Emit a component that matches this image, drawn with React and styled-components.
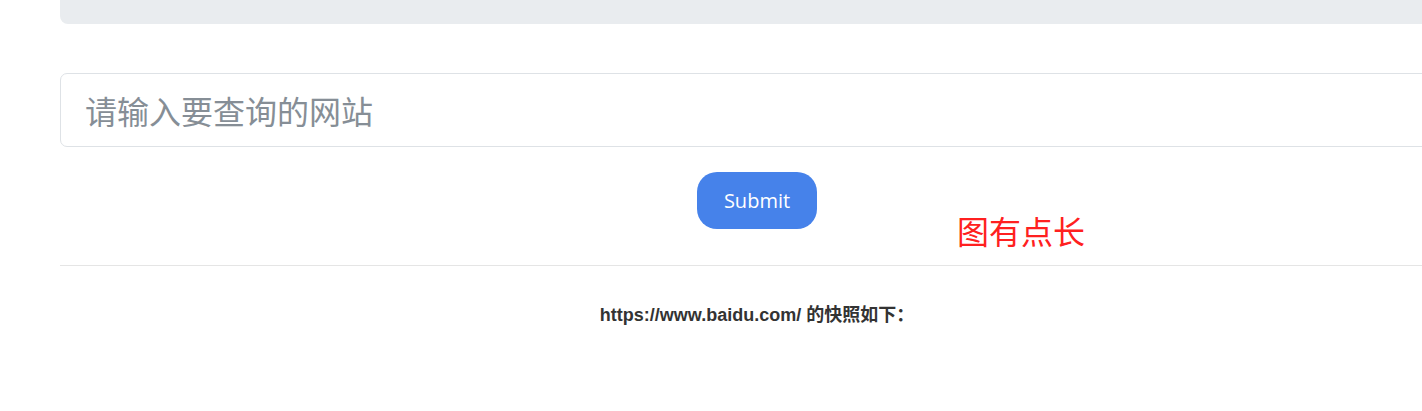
import { createGlobalStyle, styled } from "styled-components";

const GlobalStyle = createGlobalStyle`
  html, body {
    margin: 0;
    padding: 0;
    overflow: hidden;
    background: #fff;
  }
`;

const Page = styled.div`
  display: flow-root;
  position: relative;
  width: 1394px;
  padding-left: 60px;
  font-family: "Liberation Sans", Arial, "Noto Sans CJK SC", sans-serif;
`;

// only the bottom of the jumbotron is still in view
const Jumbotron = styled.div`
  height: 200px;
  margin-top: -176px;
  background: #e9ecef;
  border-radius: 8px;
`;

const SearchForm = styled.form`
  display: flex;
  flex-direction: column;
  align-items: center;
  gap: 25px;
  margin-top: 49px;
`;

const UrlInput = styled.input`
  box-sizing: border-box;
  width: 100%;
  height: 74px;
  padding: 0 24px;
  border: 1px solid #dee2e6;
  border-radius: 7px;
  font-family: "Noto Sans CJK SC", sans-serif;
  font-size: 32px;
  color: #495057;
  outline: none;

  &::placeholder {
    color: #868e96;
  }
`;

const SubmitButton = styled.button`
  width: 120px;
  height: 57px;
  border: none;
  border-radius: 20px;
  background: #4682ea;
  color: #fff;
  font-family: "Open Sans", "Noto Sans", sans-serif;
  font-size: 20px;
  cursor: pointer;
`;

const Note = styled.span`
  position: absolute;
  left: 957px;
  top: 212px;
  font-family: "Noto Sans CJK SC", sans-serif;
  font-size: 32px;
  line-height: 36px;
  color: #ff2020;
`;

const Divider = styled.hr`
  margin: 36px 0 0;
  border: none;
  border-top: 1px solid #e5e5e5;
`;

const Caption = styled.p`
  margin: 37px 0 0;
  text-align: center;
  font-size: 18px;
  font-weight: 700;
  line-height: 24px;
  color: #333;
`;

export default function App() {
  return (
    <>
      <GlobalStyle />
      <Page>
        <Jumbotron />
        <SearchForm onSubmit={(e) => e.preventDefault()}>
          <UrlInput type="text" placeholder="请输入要查询的网站" />
          <SubmitButton type="submit">Submit</SubmitButton>
        </SearchForm>
        <Note>图有点长</Note>
        <Divider />
        <Caption>https://www.baidu.com/ 的快照如下：</Caption>
      </Page>
    </>
  );
}
